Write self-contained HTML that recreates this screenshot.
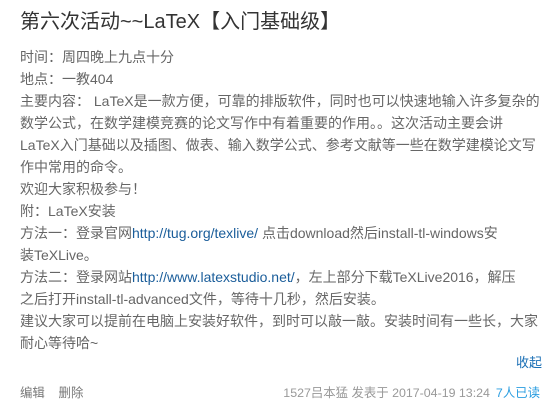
<!DOCTYPE html>
<html><head><meta charset="utf-8"><style>
body{margin:0;background:#fff;font-family:"Liberation Sans","Noto Sans CJK SC",sans-serif;width:560px;height:419px;overflow:hidden;position:relative}
h1{position:absolute;left:20px;top:9px;margin:0;font-size:20px;font-weight:normal;color:#333;white-space:nowrap;line-height:26px}
.c{position:absolute;left:20px;top:46px;font-size:14px;color:#666;line-height:22px;white-space:nowrap}
a{color:#1a5d9a;text-decoration:none}
.fold{position:absolute;right:18px;top:352px;font-size:13px;color:#1a6fb5}
.ft{position:absolute;top:383px;font-size:12.4px;color:#777}
.r{right:20px;color:#999}
.r span{color:#2a9de0;margin-left:6px}
</style></head><body>
<h1>第六次活动~~LaTeX【入门基础级】</h1>
<div class="c">
时间：周四晚上九点十分<br>
地点：一教404<br>
主要内容： LaTeX是一款方便，可靠的排版软件，同时也可以快速地输入许多复杂的<br>
数学公式，在数学建模竞赛的论文写作中有着重要的作用。。这次活动主要会讲<br>
LaTeX入门基础以及插图、做表、输入数学公式、参考文献等一些在数学建模论文写<br>
作中常用的命令。<br>
欢迎大家积极参与！<br>
附：LaTeX安装<br>
方法一：登录官网<a>http://tug.org/texlive/</a> 点击download然后install-tl-windows安<br>
装TeXLive。<br>
方法二：登录网站<a>http://www.latexstudio.net/</a>，左上部分下载TeXLive2016，解压<br>
之后打开install-tl-advanced文件，等待十几秒，然后安装。<br>
建议大家可以提前在电脑上安装好软件，到时可以敲一敲。安装时间有一些长，大家<br>
耐心等待哈~
</div>
<div class="fold">收起</div>
<div class="ft" style="left:20px">编辑&nbsp;&nbsp;&nbsp;&nbsp;删除</div>
<div class="ft r">1527吕本猛 发表于 2017-04-19 13:24<span>7人已读</span></div>
</body></html>
